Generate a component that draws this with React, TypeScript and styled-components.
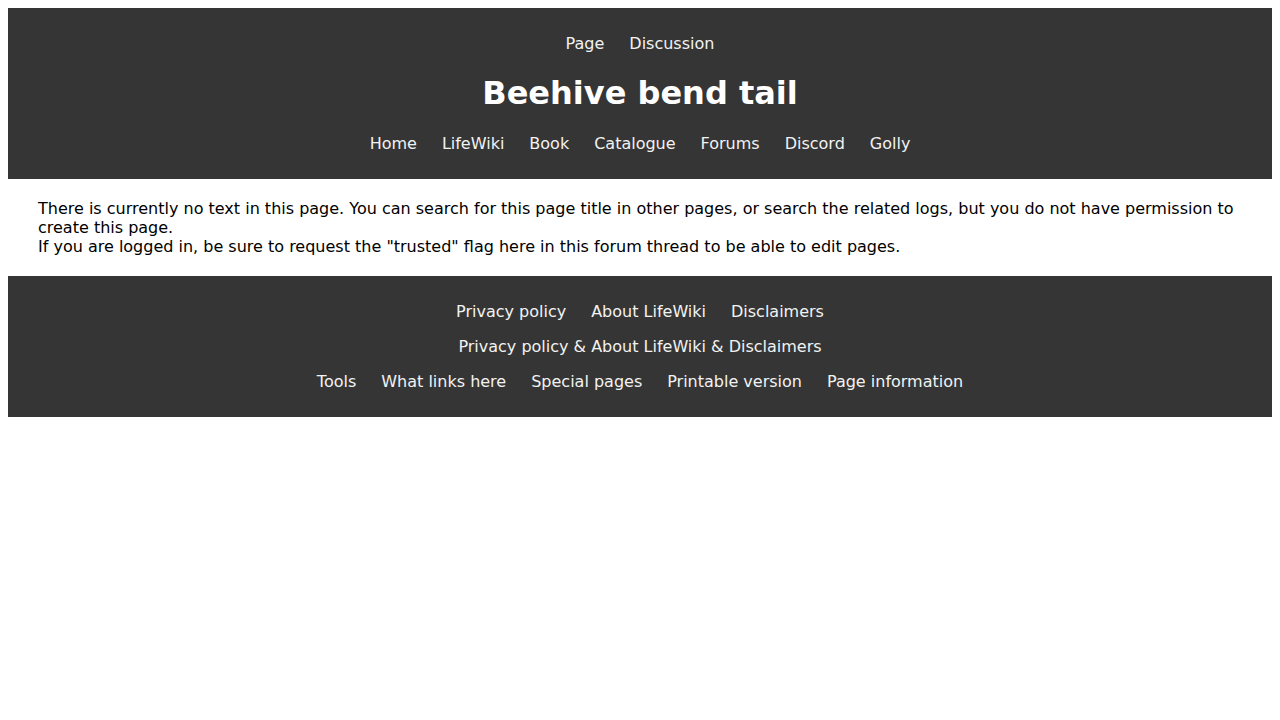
import styled, { createGlobalStyle } from 'styled-components';

const GlobalStyle = createGlobalStyle`
  body {
    margin: 8px;
    background: #ffffff;
    font-family: "DejaVu Sans", Verdana, sans-serif;
    font-size: 16px;
    color: #000000;
  }
`;

const Header = styled.header`
  background-color: #353535;
  color: #f2f2f2;
  display: flex;
  flex-direction: column;
  align-items: center;
  gap: 22px;
  padding: 26px 0 26px;
`;

const NavRow = styled.nav`
  display: flex;
  justify-content: center;
  flex-wrap: wrap;
  gap: 25px;
  line-height: 19px;
`;

const NavLink = styled.a`
  color: #f2f2f2;
  text-decoration: none;
  cursor: pointer;
`;

const Title = styled.h1`
  margin: 0;
  font-size: 32px;
  line-height: 37px;
  font-weight: bold;
  color: #ffffff;
`;

const Content = styled.main`
  padding: 20px 30px;
  line-height: 19px;
`;

const Footer = styled.footer`
  background-color: #353535;
  color: #f2f2f2;
  display: flex;
  flex-direction: column;
  align-items: center;
  gap: 16px;
  padding: 26px 0 26px;
`;

const FooterText = styled.div`
  line-height: 19px;
`;

const topLinks = ['Page', 'Discussion'];
const mainLinks = ['Home', 'LifeWiki', 'Book', 'Catalogue', 'Forums', 'Discord', 'Golly'];
const policyLinks = ['Privacy policy', 'About LifeWiki', 'Disclaimers'];
const toolLinks = ['Tools', 'What links here', 'Special pages', 'Printable version', 'Page information'];

const LinkRow = function({ links }: { links: string[] }) {
  return (
    <NavRow>
      {links.map((link) => (
        <NavLink key={link}>{link}</NavLink>
      ))}
    </NavRow>
  );
};

const App = function() {
  return (
    <>
      <GlobalStyle />
      <Header>
        <LinkRow links={topLinks} />
        <Title>Beehive bend tail</Title>
        <LinkRow links={mainLinks} />
      </Header>
      <Content>
        There is currently no text in this page. You can search for this page title in other pages, or search the related logs, but you do not have permission to create this page.
        <br />
        If you are logged in, be sure to request the "trusted" flag here in this forum thread to be able to edit pages.
      </Content>
      <Footer>
        <LinkRow links={policyLinks} />
        <FooterText>Privacy policy &amp; About LifeWiki &amp; Disclaimers</FooterText>
        <LinkRow links={toolLinks} />
      </Footer>
    </>
  );
};

export default App;
